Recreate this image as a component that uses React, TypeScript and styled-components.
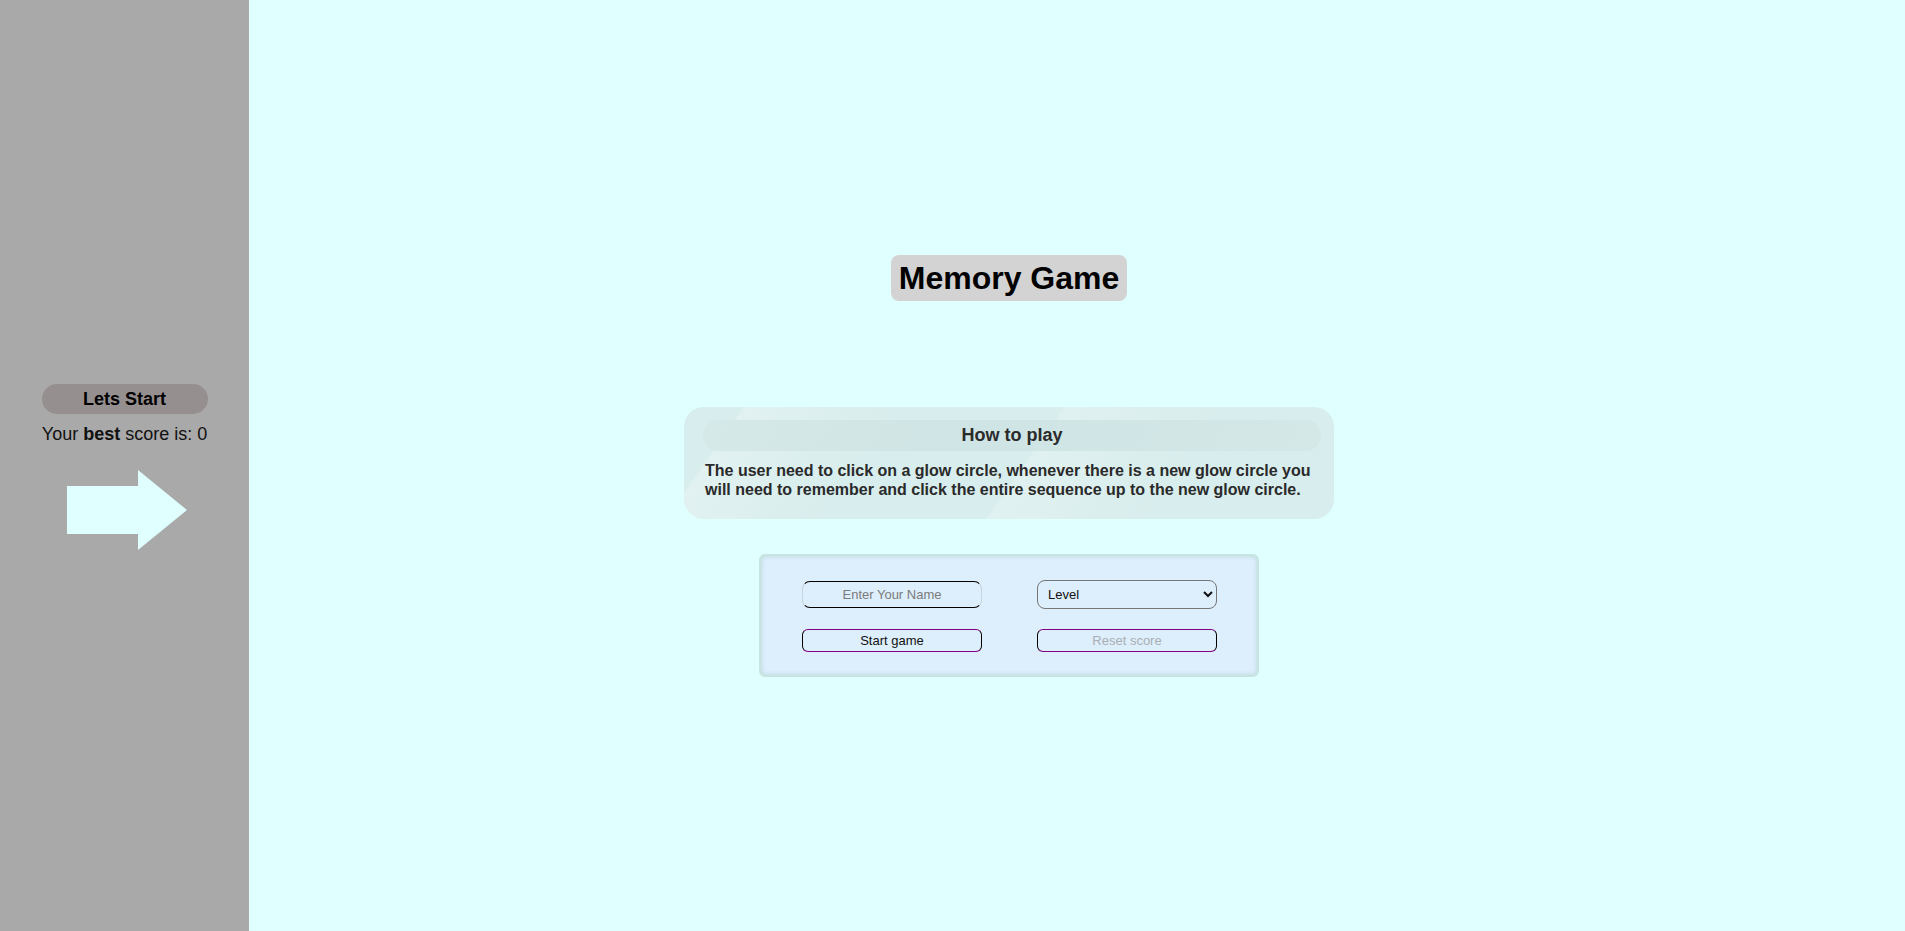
import React, { useState } from 'react'
import styled, { createGlobalStyle } from 'styled-components'

const GlobalStyle = createGlobalStyle`
  html, body {
    margin: 0;
    padding: 0;
    height: 100%;
  }
  body {
    font-family: "Liberation Sans", Arial, sans-serif;
    background: #e0ffff;
  }
`;

const Page = styled.div`
  display: flex;
  min-height: 931px;
  height: 100vh;
`;

const Sidebar = styled.aside`
  width: 249px;
  flex-shrink: 0;
  background: #a9a9a9;
  display: flex;
  flex-direction: column;
  align-items: center;
  justify-content: center;
  padding-top: 3px;
`;

const StartPill = styled.div`
  width: 166px;
  height: 30px;
  border-radius: 15px;
  background: #958f8f;
  display: flex;
  align-items: center;
  justify-content: center;
  font-size: 18px;
  font-weight: bold;
  color: #000;
`;

const BestScore = styled.p`
  margin: 10px 0 0;
  font-size: 18px;
  line-height: 21px;
  color: #111;
`;

const ArrowWrap = styled.div`
  margin-top: 25px;
  margin-left: 5px;
  width: 120px;
  height: 80px;
`;

const Main = styled.main`
  flex: 1;
  display: flex;
  flex-direction: column;
  align-items: center;
  padding: 255px 136px 0 0;
`;

const Title = styled.h1`
  margin: 0;
  padding: 6px 8px;
  background: #d3d3d3;
  border-radius: 8px;
  font-size: 32px;
  line-height: 34px;
  font-weight: bold;
  color: #000;
`;

const HowCard = styled.section`
  margin-top: 106px;
  width: 650px;
  box-sizing: border-box;
  padding: 13px 13px 20px 19px;
  border-radius: 20px;
  background:
    linear-gradient(125deg,
      rgba(255, 255, 255, 0) 0%,
      rgba(255, 255, 255, 0) 8%,
      rgba(255, 255, 255, 0.25) 8.5%,
      rgba(255, 255, 255, 0) 30%,
      rgba(255, 255, 255, 0) 52%,
      rgba(255, 255, 255, 0.22) 52.5%,
      rgba(255, 255, 255, 0) 75%),
    #d8eded;
`;

const HowHeader = styled.h2`
  margin: 0;
  height: 31px;
  border-radius: 15px;
  display: flex;
  align-items: center;
  justify-content: center;
  font-size: 18px;
  font-weight: bold;
  color: #2b2b2b;
  background: linear-gradient(125deg, #d6e9e9 0%, #cfe4e4 45%, #d4e8e8 100%);
`;

const HowText = styled.p`
  margin: 10px 0 0 2px;
  font-size: 16px;
  line-height: 19px;
  font-weight: bold;
  color: #2a2a2a;
`;

const Controls = styled.form`
  margin-top: 35px;
  width: 500px;
  box-sizing: border-box;
  padding: 24px 40px 23px 41px;
  border: 2px solid #c8e4e0;
  border-radius: 6px;
  background: #ddeefc;
  box-shadow: inset 0 0 4px rgba(150, 200, 190, 0.6);
  display: grid;
  grid-template-columns: 180px 180px;
  justify-content: space-between;
  align-items: center;
  row-gap: 20px;
`;

const NameInput = styled.input`
  box-sizing: border-box;
  width: 180px;
  height: 27px;
  border: 1px solid;
  border-color: #000 #c9d4dc;
  border-radius: 8px;
  background: transparent;
  text-align: center;
  font-family: "Liberation Sans", Arial, sans-serif;
  font-size: 13px;
  outline: none;
  &::placeholder {
    color: #7b7b7b;
  }
`;

const LevelSelect = styled.select`
  box-sizing: border-box;
  width: 180px;
  height: 29px;
  border: 1px solid #767676;
  border-radius: 8px;
  background: transparent;
  padding-left: 6px;
  font-family: "Liberation Sans", Arial, sans-serif;
  font-size: 13px;
  color: #111;
`;

const ActionButton = styled.button`
  box-sizing: border-box;
  width: 180px;
  height: 23px;
  border: 1px solid;
  border-color: #800080 #000;
  border-radius: 6px;
  background: transparent;
  font-family: "Liberation Sans", Arial, sans-serif;
  font-size: 13px;
  color: #111;
  cursor: pointer;
  &:disabled {
    color: #a9aeb3;
    cursor: default;
  }
`;

const Arrow: React.FC = () => (
  <svg width="120" height="80" viewBox="0 0 120 80">
    <polygon points="0,16 71,16 71,0 120,40 71,80 71,64 0,64" fill="#e0ffff" />
  </svg>
);

const App: React.FC = () => {
  const [name, setName] = useState('')
  const [level, setLevel] = useState('')

  return (
    <Page>
      <GlobalStyle />
      <Sidebar>
        <StartPill>Lets Start</StartPill>
        <BestScore>Your <b>best</b> score is: 0</BestScore>
        <ArrowWrap>
          <Arrow />
        </ArrowWrap>
      </Sidebar>
      <Main>
        <Title>Memory Game</Title>
        <HowCard>
          <HowHeader>How to play</HowHeader>
          <HowText>
            The user need to click on a glow circle, whenever there is a new glow circle you will need to remember and click the entire sequence up to the new glow circle.
          </HowText>
        </HowCard>
        <Controls onSubmit={e => e.preventDefault()}>
          <NameInput
            placeholder="Enter Your Name"
            value={name}
            onChange={e => setName(e.target.value)}
          />
          <LevelSelect value={level} onChange={e => setLevel(e.target.value)}>
            <option value="">Level</option>
            <option value="easy">Easy</option>
            <option value="medium">Medium</option>
            <option value="hard">Hard</option>
          </LevelSelect>
          <ActionButton type="button">Start game</ActionButton>
          <ActionButton type="button" disabled>Reset score</ActionButton>
        </Controls>
      </Main>
    </Page>
  )
}

export default App;
